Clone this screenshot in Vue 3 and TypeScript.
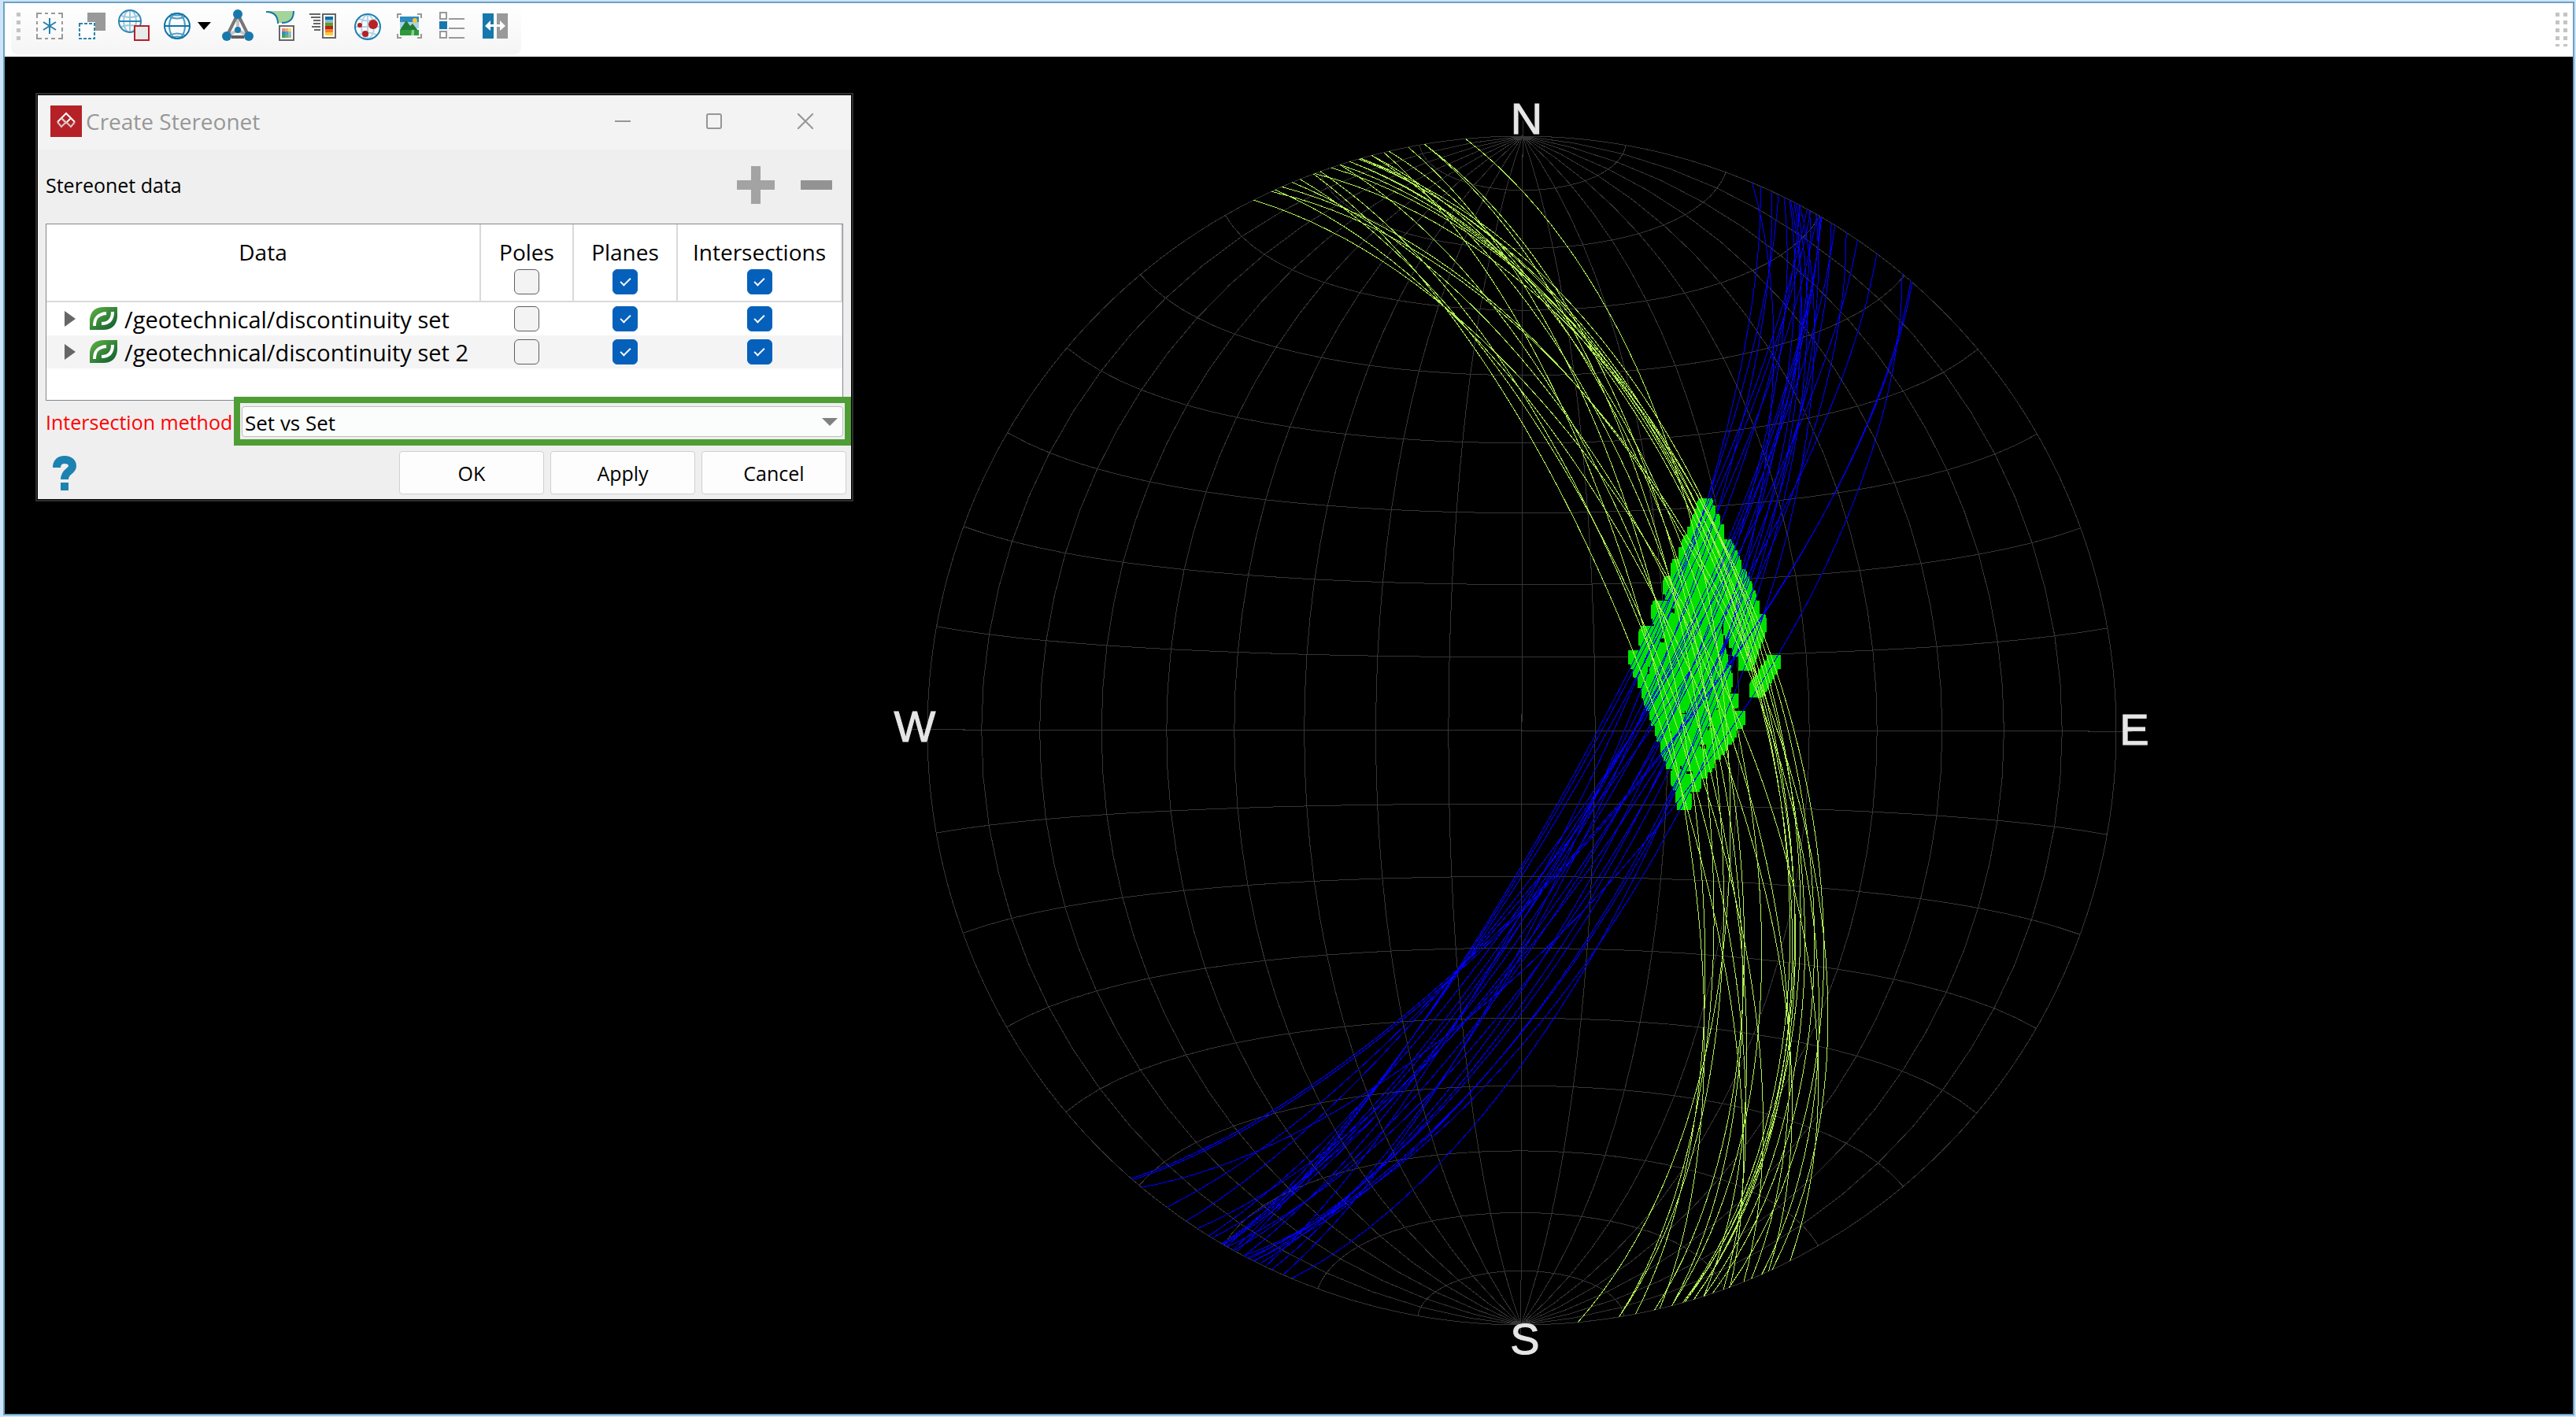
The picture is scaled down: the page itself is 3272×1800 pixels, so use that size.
<script setup lang="ts">
import { computed, reactive, ref } from 'vue'

type Vec3 = [number, number, number]

/** Equal-area net radius and the level (below centre) where traces are measured. */
const RADIUS = 755
const LEVEL = 272
const AXIS = RADIUS + 20
const rad = Math.PI / 180

interface Trace { strike: number; offset: number }

const toTraces = (rows: number[][]): Trace[] => rows.map(([strike, offset]) => ({ strike, offset }))

const setOne = toTraces([
  [13.5, 228], [11.1, 233], [9.5, 244], [20.6, 253], [9.5, 256], [5.5, 257], [19.9, 266],
  [17.9, 279], [14.7, 280], [13, 283], [22, 284], [14.7, 305], [24.6, 324], [22.8, 330],
  [15.8, 341], [16.9, 344], [16, 347], [15.8, 354], [17.9, 360], [26.9, 361], [18.8, 372],
  [23.9, 374], [20.5, 384], [25, 385], [16.9, 348],
])

const setTwo = toTraces([
  [-28.6, -61], [-29, -59], [-29.7, -56], [-34.3, -54], [-36.6, -51], [-41, -47], [-40.8, -43],
  [-31.7, -37], [-30.2, -27], [-25.5, -23], [-30.1, -20], [-27.8, -18], [-30, -9], [-23.6, 1],
  [-31.3, 5], [-24.8, 7], [-33, 13], [-28.9, 16], [-39.7, 36], [-26.1, 38], [-29.6, 40],
  [-26.7, 52], [-27.2, 61], [-26.8, 79], [-27.4, 82], [-27.8, 98], [-22.7, 98],
])

function project([x, y, z]: Vec3): [number, number] {
  const h = Math.hypot(x, y)
  if (h < 1e-9) return [0, 0]
  const r = RADIUS * Math.SQRT2 * Math.sin(Math.atan2(h, z) / 2)
  return [(x / h) * r, (y / h) * r]
}

function unproject(x: number, y: number): Vec3 {
  const r = Math.hypot(x, y)
  const c = 2 * Math.asin(r / (RADIUS * Math.SQRT2))
  return [(x / r) * Math.sin(c), (y / r) * Math.sin(c), Math.cos(c)]
}

function cross(a: Vec3, b: Vec3): Vec3 {
  return [a[1] * b[2] - a[2] * b[1], a[2] * b[0] - a[0] * b[2], a[0] * b[1] - a[1] * b[0]]
}

function toPath(points: Vec3[]): string {
  return 'M' + points.map((p) => project(p).map((v) => v.toFixed(1)).join(' ')).join('L')
}

/** The strike line and the steepest line of a plane. */
function frame({ strike, offset }: Trace): { along: Vec3; down: Vec3 } {
  const s = Math.sin(strike * rad)
  const c = Math.cos(strike * rad)
  const v = unproject(offset, LEVEL)
  const tilt = Math.atan2(v[0] * c - v[1] * s, v[2])
  return { along: [s, c, 0], down: [c * Math.sin(tilt), -s * Math.sin(tilt), Math.cos(tilt)] }
}

function planePath(t: Trace): string {
  const { along, down } = frame(t)
  const pts: Vec3[] = []
  for (let a = -90; a <= 90; a += 3) {
    const s = Math.sin(a * rad)
    const c = Math.cos(a * rad)
    pts.push([0, 1, 2].map((i) => along[i] * s + down[i] * c) as Vec3)
  }
  return toPath(pts)
}

const gridPaths = computed(() => {
  const out: string[] = []
  for (let m = -80; m <= 80; m += 10) {
    const pts: Vec3[] = []
    for (let a = -90; a <= 90; a += 5) {
      const c = Math.cos(a * rad)
      pts.push([c * Math.sin(m * rad), Math.sin(a * rad), c * Math.cos(m * rad)])
    }
    out.push(toPath(pts))
  }
  for (let k = 10; k <= 170; k += 10) {
    const pts: Vec3[] = []
    for (let l = 0; l <= 180; l += 5) {
      const s = Math.sin(k * rad)
      pts.push([s * Math.cos(l * rad), -Math.cos(k * rad), s * Math.sin(l * rad)])
    }
    out.push(toPath(pts))
  }
  return out
})

const crossings = computed(() => {
  const poles = (set: Trace[]) => set.map((t) => { const f = frame(t); return cross(f.along, f.down) })
  const second = poles(setTwo)
  return poles(setOne).flatMap((p) => second.map((q) => {
    const l = cross(p, q)
    const k = l[2] < 0 ? -1 : 1
    const [x, y] = project([l[0] * k, l[1] * k, l[2] * k])
    return { x: Math.round(x) - 9, y: Math.round(y) - 9 }
  }))
})

const columns = ['Poles', 'Planes', 'Intersections'] as const
const all = reactive([false, true, true])
const rows = reactive([
  { name: '/geotechnical/discontinuity set', show: [false, true, true] },
  { name: '/geotechnical/discontinuity set 2', show: [false, true, true] },
])
const method = ref('Set vs Set')
const bars = ['#0b6ea8', '#8fb8d8', '#5f9e14', '#b61f27', '#f58020', '#ffca3a']
const cells = ['#e58a86', '#f3a774', '#ffd76a', '#2f8fc0', '#4fa0cc', '#8cc0de', '#4c9a5c', '#6fae6c', '#93c58c']
</script>

<template>
  <main class="app">
    <header class="toolbar">
      <div class="tools">
        <svg class="handle" width="5" height="40" viewBox="0 0 5 40" aria-hidden="true">
          <rect v-for="n in 4" :key="n" x="0" :y="n * 10 - 6" width="5" height="5" fill="#c4c3c6" />
        </svg>
        <button type="button" aria-label="Select all">
          <svg viewBox="0 0 40 40">
            <path d="M4 11V5H10M31 5H36V11M36 31V37H31M10 37H4V31M14 5H18M22 5H27M14 37H18M22 37H27M4 15V19M4 23V28M36 15V19M36 23V28" fill="none" stroke="#999" stroke-width="2" />
            <path d="M20 11V31M12 16L28 26M28 16L12 26" stroke="#2480ad" stroke-width="2" />
          </svg>
        </button>
        <button type="button" aria-label="Invert selection">
          <svg viewBox="0 0 40 40">
            <path d="M14 4H37V27H24V16H14Z" fill="#999" />
            <rect x="4" y="18" width="19" height="19" fill="#fff" stroke="#2f83ad" stroke-width="2" stroke-dasharray="4 2" />
          </svg>
        </button>
        <button type="button" aria-label="Stereonet window">
          <svg viewBox="0 0 40 40">
            <g fill="none" stroke="#9cc6dd" stroke-width="2">
              <ellipse cx="14" cy="15" rx="8" ry="14" /><path d="M14 1V29M3 8Q14 12 25 8M3 22Q14 18 25 22" />
            </g>
            <path d="M0 15H28" stroke="#2a86b2" stroke-width="2" />
            <circle cx="14" cy="15" r="14" fill="none" stroke="#2a86b2" stroke-width="2" />
            <rect x="20" y="21" width="18" height="18" fill="#e9e9e9" stroke="#b5202a" stroke-width="2" />
          </svg>
        </button>
        <div class="split">
          <button type="button" aria-label="Net type">
            <svg viewBox="0 0 40 40">
              <g fill="none" stroke="#2a86b2" stroke-width="2">
                <ellipse cx="20" cy="21" rx="10" ry="16" stroke="#4e9cc2" />
                <path d="M10 9Q20 14 30 9M10 33Q20 28 30 33M12 6Q20 9 28 6M12 36Q20 33 28 36" stroke="#4e9cc2" />
                <path d="M4 21H36" stroke="#0f74a8" />
                <circle cx="20" cy="21" r="16" stroke="#0f74a8" />
              </g>
            </svg>
          </button>
          <button type="button" class="drop" aria-label="Net type options">
            <svg viewBox="0 0 23 40"><path d="M6 16H23L14 26Z" fill="#000" /></svg>
          </button>
        </div>
        <button type="button" aria-label="Ternary diagram">
          <svg viewBox="0 0 40 40">
            <path d="M20 26V10M20 26L8 33M20 26L32 33" stroke="#c4c4c4" stroke-width="4" />
            <path d="M19 8L7 32M21 8L33 32" stroke="#777" stroke-width="4" />
            <path d="M12 35H28" stroke="#5f5f5f" stroke-width="4" />
            <g fill="#1878ac"><circle cx="20" cy="6" r="6" /><circle cx="6" cy="34" r="6" /><circle cx="34" cy="34" r="6" /><circle cx="20" cy="26" r="4" /></g>
          </svg>
        </button>
        <button type="button" aria-label="Contour grid">
          <svg viewBox="0 0 40 40">
            <path d="M4 2H37Q37 17 22 17H17Q15 5 4 3Z" fill="#a5d49b" />
            <path d="M2 3Q17 3 17 18M37 2Q37 17 22 17" fill="none" stroke="#1878ac" stroke-width="2" />
            <rect x="19" y="21" width="18" height="18" fill="#fff" stroke="#666" stroke-width="2" />
            <rect v-for="(c, i) in cells" :key="i" :x="22 + (i % 3) * 4" :y="24 + Math.floor(i / 3) * 4" width="4" height="4" :fill="c" />
          </svg>
        </button>
        <button type="button" aria-label="Colour legend">
          <svg viewBox="0 0 40 40">
            <path d="M3 6H17M5 10H17M8 14H17M8 18H17M6 22H17M9 26H17" stroke="#666" stroke-width="2" />
            <rect x="20" y="6" width="16" height="30" fill="#fff" stroke="#666" stroke-width="2" />
            <rect v-for="(c, i) in bars" :key="c" x="23" :y="9 + i * 4" width="10" height="4" :fill="c" />
          </svg>
        </button>
        <button type="button" aria-label="Cluster poles">
          <svg viewBox="0 0 40 40">
            <g fill="none" stroke="#b3d3e4" stroke-width="2"><ellipse cx="23" cy="22" rx="8" ry="15" /><path d="M8 22H38M12 12Q23 17 34 12M12 32Q23 27 34 32M23 7V37" /></g>
            <circle cx="23" cy="22" r="16" fill="none" stroke="#1f7fb0" stroke-width="2" />
            <g fill="#b72025"><circle cx="13" cy="20" r="3" /><circle cx="30" cy="19" r="6" /><circle cx="20" cy="31" r="4" /></g>
          </svg>
        </button>
        <button type="button" aria-label="Save image">
          <svg viewBox="0 0 40 40">
            <path d="M7 11V6H12M32 6H37V11M37 31V36H32M12 36H7V31" fill="none" stroke="#999" stroke-width="2" />
            <rect x="10" y="9" width="24" height="12" fill="#2f8bc0" /><rect x="10" y="16" width="24" height="8" fill="#a9d3ea" />
            <circle cx="29" cy="14" r="3" fill="#ffc52e" />
            <path d="M10 26L18 14L23 21L26 18L34 28V33H10Z" fill="#1f7a34" />
            <path d="M10 26H34V33H10Z" fill="#2e9a3c" /><path d="M25 26H28V33H24Z" fill="#8ccf8e" />
          </svg>
        </button>
        <button type="button" aria-label="Properties list">
          <svg viewBox="0 0 40 40">
            <path d="M7 4H15V12H7ZM7 28H15V36H7Z" fill="#fff" stroke="#999" stroke-width="2" />
            <rect x="6" y="15" width="10" height="10" fill="#1878ac" />
            <path d="M18 12H38M18 24H38M18 36H38" stroke="#999" stroke-width="2" />
          </svg>
        </button>
        <button type="button" aria-label="Split view">
          <svg viewBox="0 0 40 40">
            <rect x="7" y="5" width="14" height="32" fill="#1878ac" /><rect x="25" y="5" width="14" height="32" fill="#999" />
            <path d="M10 21L17 14V19H21V22H17V27ZM36 21L29 14V19H25V22H29V27Z" fill="#fff" />
          </svg>
        </button>
      </div>
      <svg class="grip" width="15" height="43" viewBox="0 0 15 43" aria-hidden="true">
        <g fill="#c4c3c6">
          <template v-for="n in 4" :key="n"><rect x="0" :y="n * 10 - 10" width="5" height="5" /><rect x="10" :y="n * 10 - 10" width="5" height="5" /></template>
          <path d="M0 40H5V43H0ZM10 40H15V43H10Z" />
        </g>
      </svg>
    </header>

    <section class="viewport">
      <svg class="net" viewBox="-1927 -856 3262 1724" role="img" aria-label="Stereonet">
        <g transform="rotate(0.08)" fill="none" stroke-width="1" shape-rendering="crispEdges">
          <g stroke="#363636">
            <circle :r="RADIUS" />
            <path :d="`M0 ${-AXIS}V${AXIS}M${-AXIS} 0H${AXIS}`" />
            <path v-for="(d, i) in gridPaths" :key="i" :d="d" />
          </g>
          <g fill="#00e000" stroke="none">
            <rect v-for="(c, i) in crossings" :key="i" :x="c.x" :y="c.y" width="18" height="18" />
          </g>
          <g stroke="#0000ff"><path v-for="(t, i) in setTwo" :key="i" :d="planePath(t)" /></g>
          <g stroke="#b1f154"><path v-for="(t, i) in setOne" :key="i" :d="planePath(t)" /></g>
        </g>
        <g class="compass" text-anchor="middle">
          <text x="6" y="-758">N</text>
          <text x="778" y="18">E</text>
          <text x="4" y="792">S</text>
          <text x="-771" y="14">W</text>
        </g>
      </svg>

      <form class="dialog" @submit.prevent>
        <div class="titlebar">
          <svg class="logo" width="40" height="40" viewBox="0 0 40 40" aria-hidden="true">
            <rect width="40" height="40" fill="#b52127" />
            <path d="M9 21L20 10L31 21M14 16L20 22L26 16" fill="none" stroke="#fff" stroke-width="2" />
            <path d="M9 21L14 27L20 21L26 27L31 21M14 16L20 22" fill="none" stroke="#d9c3c3" stroke-width="2" />
          </svg>
          <h1>Create Stereonet</h1>
          <div class="window-buttons">
            <button type="button" aria-label="Minimise"><svg viewBox="0 0 20 20"><path d="M0 10H20" /></svg></button>
            <button type="button" aria-label="Maximise"><svg viewBox="0 0 20 20"><rect x="1" y="1" width="18" height="18" rx="2" /></svg></button>
            <button type="button" aria-label="Close"><svg viewBox="0 0 20 20"><path d="M0 0L20 20M20 0L0 20" /></svg></button>
          </div>
        </div>

        <div class="body">
          <div class="section-head">
            <h2>Stereonet data</h2>
            <button type="button" aria-label="Add data"><svg width="48" height="48" viewBox="0 0 48 48"><path d="M18 0H30V18H48V30H30V48H18V30H0V18H18Z" fill="#a3a3a3" /></svg></button>
            <button type="button" aria-label="Remove data"><svg width="40" height="48" viewBox="0 0 40 48"><rect y="18" width="40" height="12" fill="#939393" /></svg></button>
          </div>

          <div class="grid">
            <table>
              <thead>
                <tr>
                  <th class="data" scope="col">Data</th>
                  <th v-for="(c, i) in columns" :key="c" :class="c.toLowerCase()" scope="col">
                    <label>{{ c }}<input v-model="all[i]" type="checkbox"></label>
                  </th>
                </tr>
              </thead>
              <tbody>
                <tr v-for="row in rows" :key="row.name">
                  <td>
                    <div class="item">
                      <svg width="14" height="20" viewBox="0 0 14 20" aria-hidden="true"><path d="M0 0L14 10L0 20Z" fill="#666" /></svg>
                      <svg width="36" height="30" viewBox="0 0 36 30" aria-hidden="true">
                        <defs><linearGradient id="leaf" x1="0" y1="0" x2="1" y2="1"><stop offset="0" stop-color="#62b346" /><stop offset="1" stop-color="#0b5a2c" /></linearGradient></defs>
                        <path d="M0 29V15Q2 0 18 0H35V13Q33 29 17 29Z" fill="url(#leaf)" />
                        <path d="M6 24C6 15 9 9 21 8M15 21C25 21 29 15 29 6" fill="none" stroke="#fff" stroke-width="4" />
                      </svg>
                      <span>{{ row.name }}</span>
                    </div>
                  </td>
                  <td v-for="(c, i) in columns" :key="c" class="tick">
                    <input v-model="row.show[i]" type="checkbox" :aria-label="`${c} ${row.name}`">
                  </td>
                </tr>
              </tbody>
            </table>
          </div>

          <div class="method">
            <label for="method">Intersection method</label>
            <div class="combo">
              <select id="method" v-model="method"><option>Set vs Set</option></select>
              <svg width="20" height="10" viewBox="0 0 20 10" aria-hidden="true"><path d="M0 0H20L10 10Z" fill="#808080" /></svg>
            </div>
          </div>

          <div class="actions">
            <button type="button" class="help" aria-label="Help">
              <svg width="30" height="44" viewBox="0 0 30 44"><path d="M5 15C5 8 9 5 15 5C22 5 25 9 25 13C25 20 15 19 15 30" fill="none" stroke="#1c82b2" stroke-width="10" /><rect x="10" y="34" width="10" height="10" fill="#1c82b2" /></svg>
            </button>
            <button type="submit" class="push">OK</button>
            <button type="button" class="push">Apply</button>
            <button type="button" class="push">Cancel</button>
          </div>
        </div>
      </form>
    </section>
  </main>
</template>

<style>
body { background: #cfe4f9; }
</style>

<style scoped>
.app {
  box-sizing: border-box;
  display: flex;
  flex-direction: column;
  height: 100vh;
  margin: 0;
  padding: 2px 2px 2px 4px;
  background: #cfe4f9;
  font-family: "Open Sans", "Noto Sans", sans-serif;
  color: #000;
}
button {
  padding: 0;
  border: 0;
  background: none;
  font: inherit;
  color: inherit;
}
svg { display: block; }
.toolbar {
  display: flex;
  justify-content: space-between;
  align-items: flex-start;
  height: 68px;
  padding: 0 7px 0 8px;
  border: solid #6ba3c3;
  border-width: 2px 2px 0;
  background: #fff;
}
.tools {
  display: flex;
  align-items: center;
  gap: 14px;
  box-sizing: border-box;
  height: 65px;
  padding: 0 16px 9px 7px;
  border-radius: 8px;
  background: linear-gradient(#fff, #f5f5f6);
}
.tools button > svg { width: 40px; height: 40px; overflow: visible; }
.tools .drop > svg { width: 23px; }
.handle { margin-right: 3px; }
.split { display: flex; }
.grip { margin-top: 12px; }
.viewport {
  position: relative;
  flex: 1;
  min-height: 0;
  border: solid #6ba3c3;
  border-width: 0 2px 2px;
  background: #000;
}
.net { width: 100%; height: 100%; }
.compass {
  font-family: "Liberation Sans", sans-serif;
  font-size: 56px;
  fill: #e6e6e6;
  stroke: #e6e6e6;
  stroke-width: 1px;
}
.dialog {
  position: absolute;
  top: 46px;
  left: 39px;
  box-sizing: border-box;
  width: 1039px;
  padding: 1px;
  border: 2px solid #303030;
  background: #000;
  font-size: 25px;
}
.titlebar {
  display: flex;
  align-items: center;
  box-sizing: border-box;
  height: 69px;
  padding: 0 0 3px 16px;
  background: #f3f3f3;
}
h1 {
  flex: 1;
  margin: 0 0 0 5px;
  font-size: 28px;
  font-weight: 400;
  color: #979797;
}
.window-buttons { display: flex; }
.window-buttons button {
  display: flex;
  justify-content: center;
  width: 116px;
}
.window-buttons svg {
  width: 20px;
  height: 20px;
  fill: none;
  stroke: #969696;
  stroke-width: 2;
}
.body { padding: 0 10px 6px; background: #efefef; }
.section-head {
  display: flex;
  align-items: center;
  gap: 33px;
  box-sizing: border-box;
  height: 94px;
  padding: 0 14px 4px 0;
}
h2 { flex: 1; margin: 0; font-size: 25px; font-weight: 400; }
.grid {
  box-sizing: border-box;
  height: 225px;
  border: 1px solid #828790;
  background: #fff;
}
table {
  width: 100%;
  border-collapse: separate;
  border-spacing: 0;
  table-layout: fixed;
}
th {
  box-sizing: border-box;
  height: 99px;
  padding: 15px 0 8px;
  border: solid #d9d9d9;
  border-width: 0 2px 2px 0;
  font-size: 28px;
  font-weight: 400;
  line-height: 40px;
  vertical-align: top;
}
th label { display: flex; flex-direction: column; align-items: center; gap: 2px; }
.data { width: 552px; }
.poles { width: 118px; }
.planes { width: 132px; }
td { height: 42px; padding: 0; }
tbody tr:nth-child(2) { background: #f4f4f4; }
.item {
  display: flex;
  align-items: center;
  height: 42px;
  padding-left: 23px;
  font-size: 29px;
  line-height: 40px;
  white-space: nowrap;
}
.item svg + svg { margin: 0 8px 0 18px; }
.item span { padding-top: 2px; }
.tick input { margin: 0 auto; position: relative; left: -1px; }
input {
  appearance: none;
  display: flex;
  justify-content: center;
  align-items: center;
  box-sizing: border-box;
  width: 32px;
  height: 32px;
  margin: 0;
  border: 1px solid #5f5f5f;
  border-radius: 6px;
  background: #f3f3f3;
}
input:checked { border-color: #0560bb; background: #0560bb; }
input:checked::before {
  content: "";
  width: 5px;
  height: 11px;
  margin-bottom: 3px;
  border: solid #fff;
  border-width: 0 2px 2px 0;
  transform: rotate(45deg);
}
.method {
  position: relative;
  display: flex;
  align-items: center;
  height: 62px;
  margin: -5px -10px 0 0;
}
.method label { width: 239px; padding-top: 2px; color: #f00; white-space: nowrap; }
.combo {
  position: relative;
  flex: 1;
  box-sizing: border-box;
  height: 62px;
  padding: 4px 2px 3px;
  border: 8px solid #4e9e35;
  background: #efefef;
}
select {
  appearance: none;
  display: block;
  box-sizing: border-box;
  width: 100%;
  height: 39px;
  padding: 2px 3px 0;
  border: 1px solid #bcbfbe;
  border-radius: 4px;
  background: #fbfdfc;
  font-family: inherit;
  font-size: 26px;
  color: #000;
}
.combo svg { position: absolute; top: 19px; right: 9px; }
.actions {
  display: flex;
  gap: 8px;
  margin: 7px -4px 0 0;
}
.help { margin: 0 auto 0 9px; }
.push {
  box-sizing: border-box;
  width: 184px;
  height: 55px;
  border: 1px solid #d0d0d0;
  border-radius: 4px;
  background: #fdfdfd;
}
</style>
